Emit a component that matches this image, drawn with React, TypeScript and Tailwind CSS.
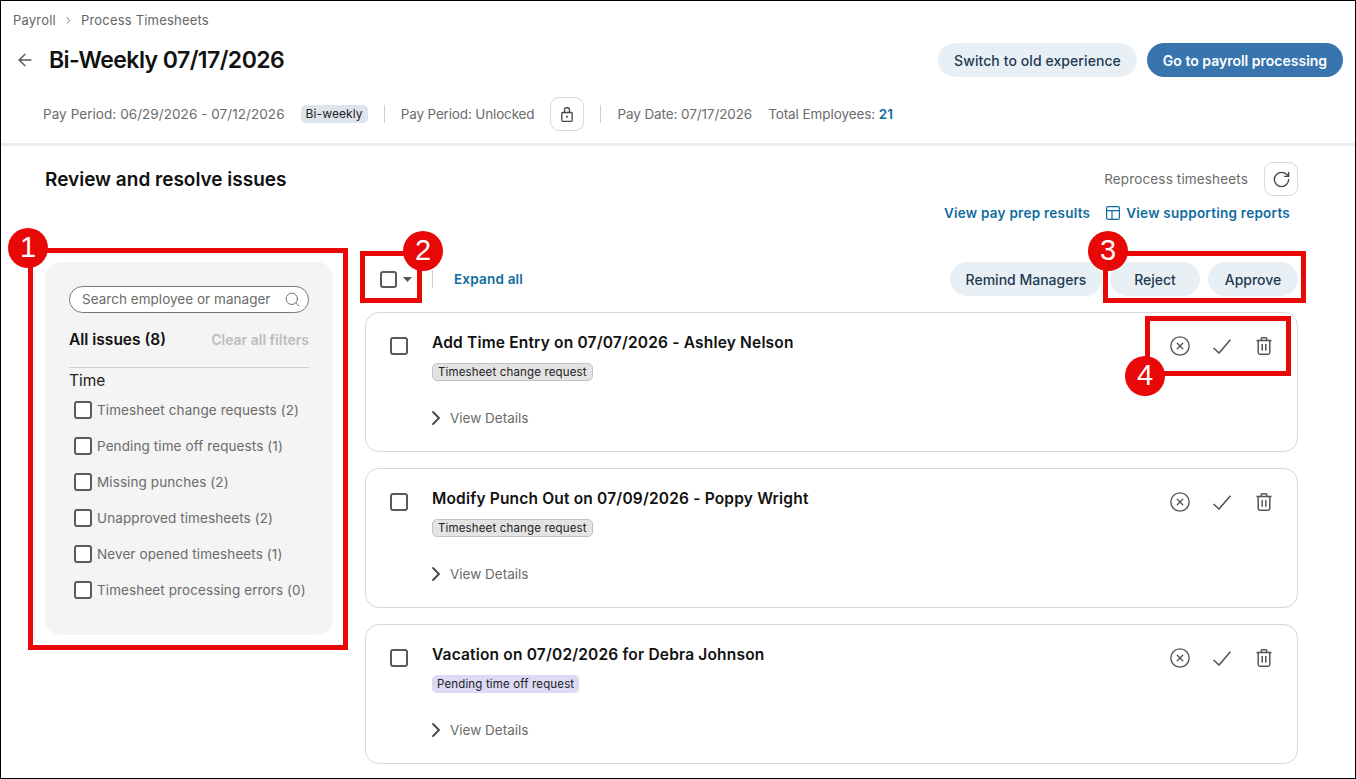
import { ArrowLeft, ChevronRight, CircleX, RotateCw, Search } from "lucide-react";

const filters = [
  "Timesheet change requests (2)",
  "Pending time off requests (1)",
  "Missing punches (2)",
  "Unapproved timesheets (2)",
  "Never opened timesheets (1)",
  "Timesheet processing errors (0)",
];

const issues = [
  { title: "Add Time Entry on 07/07/2026 - Ashley Nelson", tag: "Timesheet change request", purple: false },
  { title: "Modify Punch Out on 07/09/2026 - Poppy Wright", tag: "Timesheet change request", purple: false },
  { title: "Vacation on 07/02/2026 for Debra Johnson", tag: "Pending time off request", purple: true },
];

function Box() {
  return <span className="block h-[18px] w-[18px] shrink-0 rounded-[3px] border-2 border-[#5a5a5a] bg-white" />;
}

function Pill({ children, className }: { children: string; className: string }) {
  return (
    <button className={`flex h-[34px] items-center justify-center rounded-full bg-[#e8f0f6] text-[14px] font-medium text-[#1e3a52] ${className}`}>
      {children}
    </button>
  );
}

function Divider() {
  return <span className="block h-[18px] w-px bg-[#cfcfcf]" />;
}

function IssueCard({ title, tag, purple }: { title: string; tag: string; purple: boolean }) {
  return (
    <div className="flex h-[140px] rounded-[14px] border border-[#d8d8d8] bg-white pr-[25px] pl-6">
      <div className="pt-6">
        <Box />
      </div>
      <div className="ml-[24px] flex-1 pt-[20px]">
        <div className="text-[15.5px] leading-5 font-semibold tracking-[0.18px] text-[#111]">{title}</div>
        <span
          className={`mt-[10px] block w-fit rounded-[5px] px-[5px] text-[11.5px] tracking-[0.15px] text-[#222] ${
            purple ? "bg-[#dcdaf5] leading-[18px]" : "border border-[#c4c4c4] bg-[#e3e3e3] leading-[16px]"
          }`}
        >
          {tag}
        </span>
        <div className="mt-[25px] flex items-center gap-[2px] text-[13.5px] text-[#6b6b6b]">
          <ChevronRight size={24} strokeWidth={1.8} className="-ml-[8px] text-[#444]" />
          View Details
        </div>
      </div>
      <div className="flex h-fit items-center pt-[22px] text-[#555]">
        <CircleX size={22} strokeWidth={1.5} />
        <svg width="18" height="15" viewBox="0 0 18 15" fill="none" stroke="currentColor" strokeWidth="1.6" className="ml-[22px]">
          <path d="M0.6 9 6 14 17.4 0.8" />
        </svg>
        <svg width="16" height="18" viewBox="0 0 16 18" fill="none" stroke="currentColor" strokeWidth="1.5" className="ml-[25px]">
          <path d="M0.5 3.6h15M5.2 3.6V1.8a1 1 0 0 1 1-1h3.6a1 1 0 0 1 1 1v1.8" />
          <path d="M2.2 3.6v12a1.6 1.6 0 0 0 1.6 1.6h8.4a1.6 1.6 0 0 0 1.6-1.6v-12" />
          <path d="M6.2 7v6.8M9.8 7v6.8" />
        </svg>
      </div>
    </div>
  );
}

function Frame({ className }: { className: string }) {
  return <div className={`absolute border-[5px] border-[#e80808] ${className}`} />;
}

function Badge({ n, className }: { n: number; className: string }) {
  return (
    <div className={`absolute flex h-10 w-10 items-center justify-center rounded-full bg-[#e80808] font-['Liberation_Sans',sans-serif] text-[29px] text-white ${className}`}>
      {n}
    </div>
  );
}

export default function App() {
  return (
    <div className="relative h-[779px] w-[1356px] overflow-hidden border border-black bg-white font-['Inter',sans-serif]">
      {/* Header */}
      <div className="flex items-center gap-[7px] pt-[11px] pl-3 text-[13px] leading-4 tracking-[0.2px] text-[#666]">
        Payroll
        <ChevronRight size={11} />
        Process Timesheets
      </div>
      <div className="flex items-center pt-[15px] pr-[12px] pl-[14px]">
        <ArrowLeft size={20} strokeWidth={1.6} className="text-[#555]" />
        <h1 className="ml-[14px] text-[23px] leading-[34px] font-semibold tracking-[-0.55px] text-[#111]">Bi-Weekly 07/17/2026</h1>
        <div className="ml-auto flex gap-[10px]">
          <Pill className="w-[199px] tracking-[0.08px]">Switch to old experience</Pill>
          <button className="h-[34px] w-[196px] rounded-full bg-[#3874ae] text-[14px] font-semibold text-white">
            Go to payroll processing
          </button>
        </div>
      </div>
      <div className="mt-[20px] flex h-[34px] items-center pl-[42px] text-[13.5px] text-[#6b6b6b]">
        <span className="tracking-[0.06px]">Pay Period: 06/29/2026 - 07/12/2026</span>
        <span className="mx-[16px] rounded-[5px] bg-[#dde4ec] px-[5px] text-[12px] leading-[18px] tracking-[0.1px] text-[#222]">Bi-weekly</span>
        <Divider />
        <span className="ml-[16px] tracking-[-0.15px]">Pay Period: Unlocked</span>
        <span className="mx-[16px] flex h-[34px] w-[34px] items-center justify-center rounded-[9px] border border-[#d8d8d8]">
          <svg width="12" height="15" viewBox="0 0 12 15" fill="none" stroke="#444" strokeWidth="1.3">
            <path d="M3.5 5.5V3a2.5 2.5 0 0 1 5 0v2.5" />
            <rect x="0.8" y="5.5" width="10.4" height="8.8" rx="1" />
            <circle cx="6" cy="9.8" r="1" fill="#444" stroke="none" />
          </svg>
        </span>
        <Divider />
        <span className="ml-[16px] tracking-[-0.1px]">Pay Date: 07/17/2026</span>
        <span className="ml-[16px] tracking-[-0.08px]">
          Total Employees: <b className="font-semibold text-[#0f6c9e]">21</b>
        </span>
      </div>
      <div className="mt-[12px] h-[3px] bg-[#ececec]" />

      {/* Body */}
      <div className="px-[44px]">
        <div className="flex items-start justify-between pt-[16px] pr-[13px]">
          <h2 className="pt-[4px] text-[19px] font-semibold text-[#111]">Review and resolve issues</h2>
          <div className="flex items-center gap-[16px] text-[13.5px] tracking-[0.15px] text-[#6b6b6b]">
            Reprocess timesheets
            <span className="flex h-[34px] w-[34px] items-center justify-center rounded-[9px] border border-[#d8d8d8]">
              <RotateCw size={19} strokeWidth={1.7} className="text-[#444]" />
            </span>
          </div>
        </div>
        <div className="mt-[7px] flex items-center justify-end gap-[16px] pr-[21px] text-[13.5px] leading-5 font-semibold tracking-[0.25px] text-[#0f6c9e]">
          View pay prep results
          <span className="flex items-center gap-[6px]">
            <svg width="14" height="14" viewBox="0 0 14 14" fill="none" stroke="#0f6c9e" strokeWidth="1.2">
              <rect x="0.6" y="0.6" width="12.8" height="12.8" rx="1.5" />
              <path d="M0.6 4.6h12.8M6 4.6v8.8" />
            </svg>
            View supporting reports
          </span>
        </div>

        <div className="mt-[39px] flex gap-[32px]">
          {/* Filters */}
          <aside className="h-[373px] w-[288px] shrink-0 rounded-[16px] bg-[#f4f4f4] px-[24px] pt-[24px]">
            <div className="flex h-[27px] items-center justify-between rounded-full border border-[#777] bg-white pr-[7px] pl-[12px] text-[13.5px] tracking-[0.03px] text-[#6b6b6b]">
              Search employee or manager
              <Search size={17} strokeWidth={1.3} className="text-[#666]" />
            </div>
            <div className="flex items-center justify-between pt-[16px] pb-[17px]">
              <span className="text-[15.5px] leading-5 font-semibold text-[#111]">All issues (8)</span>
              <span className="text-[14px] font-semibold text-[#bdbdbd]">Clear all filters</span>
            </div>
            <div className="border-t border-[#cfcfcf] pt-[3px] text-[15.5px] leading-5 text-[#222]">Time</div>
            <div className="mt-[10px] flex flex-col gap-[18px] pl-[5px]">
              {filters.map((f) => (
                <label key={f} className="flex h-[18px] items-center gap-[5px] text-[13.5px] tracking-[0.1px] text-[#6b6b6b]">
                  <Box />
                  {f}
                </label>
              ))}
            </div>
          </aside>

          {/* Issues */}
          <div className="w-[933px]">
            <div className="flex h-[34px] items-center">
              <span className="ml-[15px] block h-[17px] w-[17px] rounded-[3px] border-2 border-[#5a5a5a]" />
              <svg width="9" height="5" viewBox="0 0 9 5" className="ml-[6px]">
                <path d="M0 0h9L4.5 5z" fill="#555" />
              </svg>
              <span className="mr-[21px] ml-[20px]">
                <Divider />
              </span>
              <span className="pt-px text-[13.5px] font-semibold tracking-[0.2px] text-[#0f6c9e]">Expand all</span>
              <div className="ml-auto flex gap-2">
                <Pill className="w-[152px]">Remind Managers</Pill>
                <Pill className="w-[90px]">Reject</Pill>
                <Pill className="w-[90px]">Approve</Pill>
              </div>
            </div>
            <div className="mt-[16px] flex flex-col gap-4">
              {issues.map((i) => (
                <IssueCard key={i.title} {...i} />
              ))}
            </div>
          </div>
        </div>
      </div>

      {/* Callouts */}
      <div className="pointer-events-none absolute -inset-px">
        <Frame className="top-[248px] left-[28px] h-[402px] w-[320px]" />
        <Frame className="top-[251px] left-[360px] h-[52px] w-[62px]" />
        <Frame className="top-[251px] left-[1103px] h-[52px] w-[203px]" />
        <Frame className="top-[316px] left-[1145px] h-[60px] w-[146px]" />
        <Badge n={1} className="top-[228px] left-[8px]" />
        <Badge n={2} className="top-[231px] left-[403px]" />
        <Badge n={3} className="top-[231px] left-[1088px]" />
        <Badge n={4} className="top-[356px] left-[1125px]" />
      </div>
    </div>
  );
}
